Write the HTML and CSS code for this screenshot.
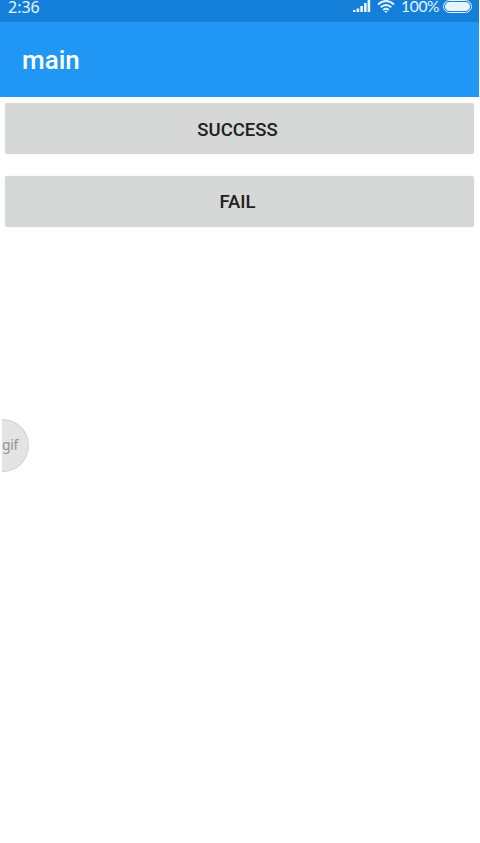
FILE: index.html
```html
<!DOCTYPE html>
<html lang="en">
<head>
<meta charset="utf-8">
<title>main</title>
<link rel="stylesheet" href="styles.css">
</head>
<body>
<div class="status">
  <span class="time">2:36</span>
  <div class="indicators">
    <svg class="signal" width="18" height="12" viewBox="0 0 18 12"><path d="M0 10h2.500v2H0zM3.600 8.500h2.600V12H3.600zM7.300 6h2.600v6H7.300zM11 3h2.600v9H11zM14.600 0h2.600v12h-2.600z"/></svg>
    <svg class="wifi" width="18" height="13" viewBox="0 0 18 13"><path d="M1 4.500Q9-2.500 17 4.500M3.700 7.300Q9 2.700 14.300 7.300M6.200 10Q9 7.600 11.800 10"/><path class="dot" d="M7.300 11.300Q9 10 10.700 11.300L9 13z"/></svg>
    <span class="percent">100%</span>
    <span class="battery"><span class="charge"></span></span>
  </div>
</div>
<header class="toolbar"><h1>main</h1></header>
<main class="content">
  <button class="button">SUCCESS</button>
  <button class="button fail">FAIL</button>
</main>
<div class="recorder">gif</div>
</body>
</html>
```
FILE: styles.css
```css
* {
  box-sizing: border-box;
}

body {
  margin: 0;
  height: 843px;
  overflow: hidden;
  background: #fff;
  font-family: Roboto, sans-serif;
}

.status {
  display: flex;
  justify-content: space-between;
  width: 479px;
  height: 22px;
  padding: 0 7px 0 8px;
  background: #147fd8;
  color: #e8f5ff;
  font: 16px/14px "Noto Sans", sans-serif;
}

.time {
  letter-spacing: 0;
}

.indicators {
  display: flex;
  height: 13px;
}

.signal {
  margin-right: 6px;
  fill: currentColor;
}

.wifi {
  margin-right: 6px;
  fill: none;
  stroke: currentColor;
  stroke-width: 1.8;
}

.wifi .dot {
  fill: currentColor;
  stroke: none;
}

.percent {
  width: 42px;
  font: 15.500px/12px Lato, sans-serif;
  letter-spacing: -0.3px;
  white-space: nowrap;
}

.battery {
  width: 29px;
  height: 13px;
  padding: 1px;
  border: 1px solid #e8f5ff;
  border-radius: 7px;
}

.charge {
  display: block;
  height: 9px;
  border-radius: 5px;
  background: #e8f5ff;
}

.toolbar {
  display: flex;
  align-items: center;
  width: 479px;
  height: 75px;
  padding: 1px 22px 0;
  background: #2097f5;
}

.toolbar h1 {
  margin: 0;
  color: #fff;
  font-size: 26px;
  font-weight: 500;
  line-height: 32px;
}

.content {
  display: flex;
  flex-direction: column;
  gap: 22px;
  width: 479px;
  padding: 6px 5px;
}

.button {
  height: 51px;
  padding: 2px 4px 0 0;
  border: 0;
  border-radius: 3px;
  background: #d6d7d7;
  box-shadow: 0 0 1px #c8c8c8;
  color: #202020;
  font: 500 18.500px/24px Roboto, sans-serif;
}

.fail {
  padding-top: 0;
}

.recorder {
  position: absolute;
  top: 419px;
  left: 2px;
  width: 27px;
  height: 53px;
  border: 1px solid #d2d2d2;
  border-left: 0;
  border-radius: 0 27px 27px 0;
  background: #e4e4e4;
  color: #949494;
  font: 14px/49px "Noto Sans", sans-serif;
  letter-spacing: -0.4px;
}
```
